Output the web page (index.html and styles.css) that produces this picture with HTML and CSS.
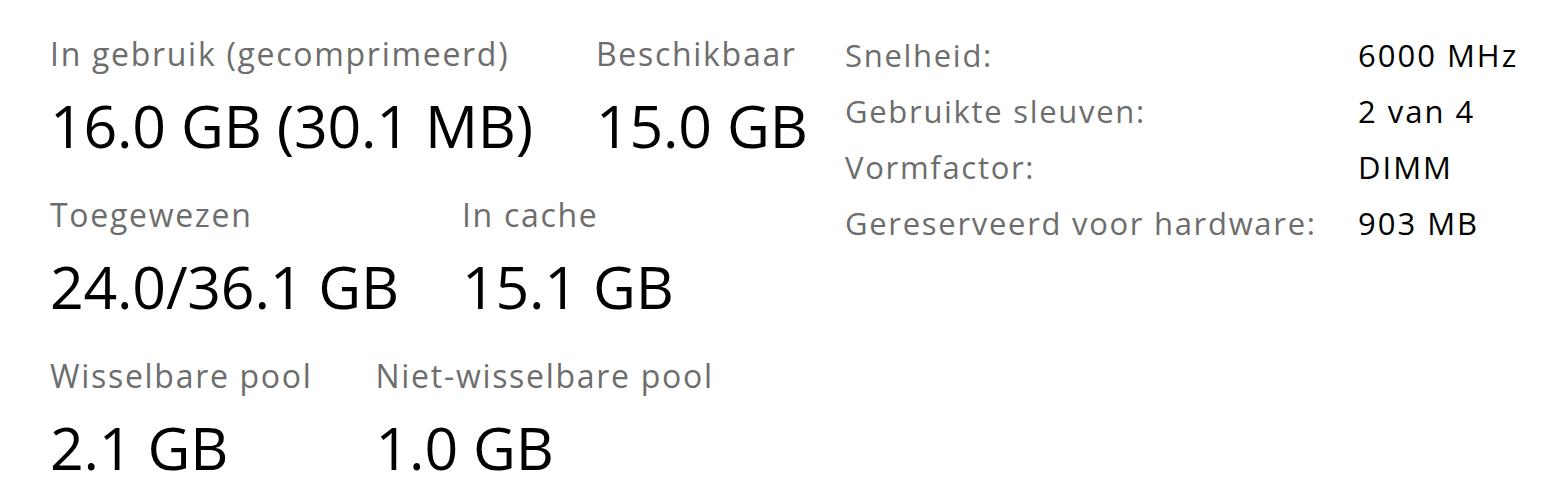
FILE: index.html
```html
<!DOCTYPE html>
<html lang="nl">
<head>
    <meta charset="UTF-8">
    <title>Geheugen</title>
    <link rel="stylesheet" href="styles.css">
</head>
<body>
    <div class="panel">
        <div class="stats">
            <div class="stat-row">
                <div class="stat">
                    <div class="stat-label">In gebruik (gecomprimeerd)</div>
                    <div class="stat-value">16.0 GB (30.1 MB)</div>
                </div>
                <div class="stat">
                    <div class="stat-label">Beschikbaar</div>
                    <div class="stat-value">15.0 GB</div>
                </div>
            </div>
            <div class="stat-row">
                <div class="stat">
                    <div class="stat-label">Toegewezen</div>
                    <div class="stat-value">24.0/36.1 GB</div>
                </div>
                <div class="stat">
                    <div class="stat-label">In cache</div>
                    <div class="stat-value">15.1 GB</div>
                </div>
            </div>
            <div class="stat-row">
                <div class="stat">
                    <div class="stat-label">Wisselbare pool</div>
                    <div class="stat-value">2.1 GB</div>
                </div>
                <div class="stat">
                    <div class="stat-label">Niet-wisselbare pool</div>
                    <div class="stat-value">1.0 GB</div>
                </div>
            </div>
        </div>

        <div class="details">
            <div class="detail-label">Snelheid:</div>
            <div class="detail-value">6000 MHz</div>
            <div class="detail-label">Gebruikte sleuven:</div>
            <div class="detail-value">2 van 4</div>
            <div class="detail-label">Vormfactor:</div>
            <div class="detail-value">DIMM</div>
            <div class="detail-label">Gereserveerd voor hardware:</div>
            <div class="detail-value">903 MB</div>
        </div>
    </div>
</body>
</html>
```

FILE: styles.css
```css
body {
    font-family: 'Open Sans', 'Noto Sans', sans-serif;
    background-color: #fff;
    color: #000;
    margin: 0;
    padding: 0;
}
.panel {
    display: flex;
    padding: 33px 0 0 50px;
}
.stats {
    width: 795px;
    display: flex;
    flex-direction: column;
    gap: 29px;
}
.stat-row {
    display: flex;
    gap: 63px;
}
.stat-label {
    font-size: 32px;
    line-height: 42px;
    letter-spacing: 1.7px;
    color: #6d6d6d;
    margin-bottom: 10px;
    white-space: nowrap;
}
.stat-value {
    font-size: 59px;
    line-height: 80px;
    letter-spacing: -0.2px;
    white-space: nowrap;
}
.details {
    margin-top: -6px;
    display: grid;
    grid-template-columns: 513px auto;
    grid-auto-rows: 56px;
    font-size: 31px;
    line-height: 56px;
    white-space: nowrap;
}
.detail-label {
    color: #6d6d6d;
    letter-spacing: 1.7px;
}
.detail-value {
    color: #000;
    letter-spacing: 2px;
}
```
